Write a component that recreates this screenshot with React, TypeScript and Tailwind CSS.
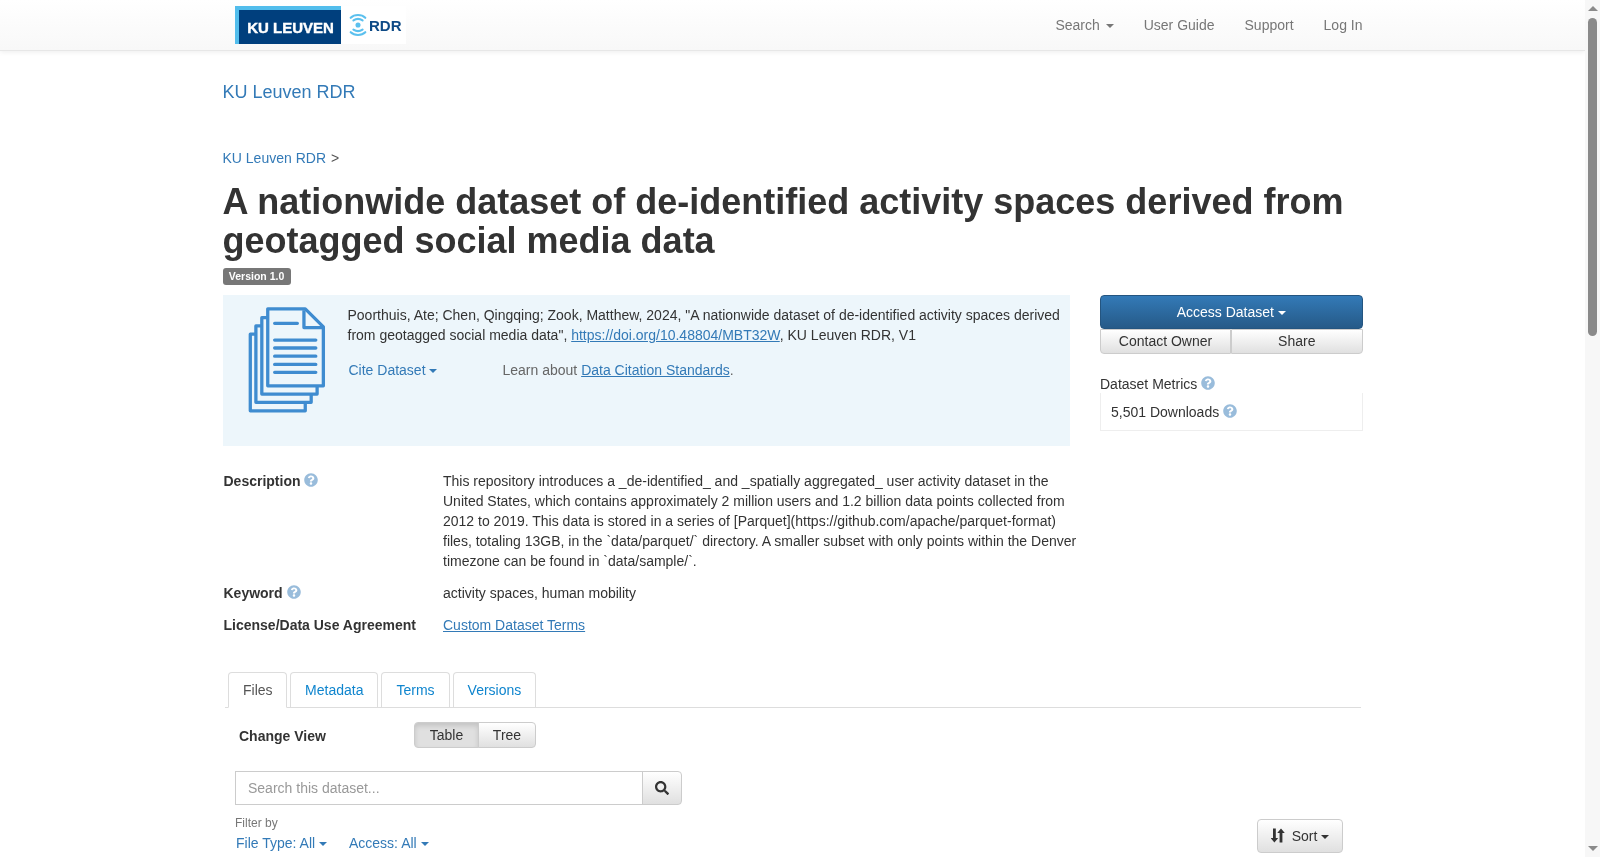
import React from 'react';
import { FaQuestionCircle, FaSearch } from 'react-icons/fa';

const Caret = ({ tight = false }: { tight?: boolean }) => (
  <span className={`inline-block w-0 h-0 align-middle border-x-4 border-t-4 border-x-transparent border-t-current ${tight ? 'ml-0' : 'ml-[2px]'}`} />
);

const Help = () => (
  <FaQuestionCircle className="inline-block align-[-1px] text-[#99bcdb]" size={14} />
);

const Logo = () => (
  <div className="flex h-[38px] w-[171px] bg-white mt-[6px]">
    <div className="w-[106px] h-[38px] bg-[#003f7d] border-l-4 border-t-4 border-[#52bdec] flex items-center justify-center">
      <span className="text-white font-bold text-[15px] leading-none pl-[1px] [-webkit-text-stroke:0.4px_white]">KU LEUVEN</span>
    </div>
    <div className="flex items-center pl-[7px]">
      <svg width="20" height="26" viewBox="0 0 22 26" fill="none" stroke="#5bc0ee" strokeWidth="2.4" strokeLinecap="round">
        <path d="M3 5 C7 1 15 1 19 5" />
        <path d="M6 8 C9 6 13 6 16 8" />
        <circle cx="11" cy="13" r="2.8" fill="#5bc0ee" stroke="none" />
        <path d="M6 18 C9 20 13 20 16 18" />
        <path d="M3 21 C7 25 15 25 19 21" />
      </svg>
      <span className="ml-[1px] text-[#0e4a86] font-bold text-[15px] leading-none">RDR</span>
    </div>
  </div>
);

const DocsIcon = () => (
  <svg width="79" height="109" viewBox="110 60 240 330" fill="none" stroke="#3f8cd0" strokeWidth="10" strokeLinejoin="round" className="shrink-0">
    <path d="M137 145 H120 V378 H287 V352" />
    <path d="M155 120 H137 V352 H305 V327" />
    <path d="M173 95 H155 V327 H323 V302" />
    <path d="M173 68 H287 L342 123 V302 H173 Z" />
    <path d="M283 72 V125 H340" />
    <path d="M194 112 H263 M194 163 H319 M194 187 H319 M194 212 H319 M194 237 H319 M194 261 H319" strokeLinecap="round" />
  </svg>
);

const Scrollbar = () => (
  <aside className="w-[15px] shrink-0 h-full bg-[#f7f7f7] flex flex-col items-center pt-[6px] pb-[6px]">
    <span className="w-0 h-0 border-x-[5px] border-b-[5px] border-x-transparent border-b-[#8a8a8a]" />
    <span className="mt-[7px] w-[9px] h-[318px] rounded-full bg-[#8a8a8a]" />
    <span className="mt-auto w-0 h-0 border-x-[5px] border-t-[5px] border-x-transparent border-t-[#8a8a8a]" />
  </aside>
);

const navItems = ['User Guide', 'Support', 'Log In'];
const tabs = ['Metadata', 'Terms', 'Versions'];

export default function App() {
  return (
    <div className="flex h-screen overflow-hidden [font-family:'Liberation_Sans',Arial,sans-serif] text-[14px] leading-[20px] text-[#333] bg-white">
      <main className="flex-1 min-w-0 overflow-hidden [will-change:transform]">
        <nav className="h-[51px] bg-gradient-to-b from-white to-[#f8f8f8] border-b border-[#e7e7e7] shadow-[0_1px_5px_rgba(0,0,0,0.075)]">
          <div className="w-[1170px] mx-auto pl-[27.5px] pr-[15px] flex justify-between">
            <Logo />
            <ul className="flex text-[#777]">
              <li className="px-[15px] py-[15px]">Search <Caret /></li>
              {navItems.map((item) => (
                <li key={item} className="px-[15px] py-[15px] last:pr-0">{item}</li>
              ))}
            </ul>
          </div>
        </nav>

        <div className="w-[1170px] mx-auto px-[15px]">
          <div className="pt-[31px] text-[18px] text-[#337ab7]">KU Leuven RDR</div>
          <div className="mt-[46px]">
            <span className="text-[#337ab7]">KU Leuven RDR</span>
            <span className="ml-[5px] text-[#555]">&gt;</span>
          </div>
          <h1 className="mt-[14px] text-[36px] leading-[39px] font-bold">
            A nationwide dataset of de-identified activity spaces derived from geotagged social media data
          </h1>
          <div className="mt-[8px] h-[17px]">
            <span className="block w-fit bg-[#777] text-white font-bold text-[10.5px] leading-[11px] rounded-[3px] px-[6.3px] pt-[3px] pb-[3px]">
              Version 1.0
            </span>
          </div>

          <div className="flex mt-[10px]">
            <div className="w-[847.5px] shrink-0">
              <div className="h-[151px] bg-[#edf6fb] flex pl-[24px] pt-[11px]">
                <DocsIcon />
                <div className="ml-[22px] -mt-[1px] w-[720px]">
                  <p>
                    Poorthuis, Ate; Chen, Qingqing; Zook, Matthew, 2024, "A nationwide dataset of de-identified activity spaces derived from geotagged social media data",{' '}
                    <span className="text-[#337ab7] underline">https://doi.org/10.48804/MBT32W</span>, KU Leuven RDR, V1
                  </p>
                  <div className="flex mt-[15px]">
                    <span className="w-[155px] pl-[1px] text-[#337ab7]">Cite Dataset <Caret tight /></span>
                    <span className="text-[#666]">
                      Learn about <span className="text-[#337ab7] underline">Data Citation Standards</span>.
                    </span>
                  </div>
                </div>
              </div>

              <div className="mt-[25px] flex">
                <div className="w-[220.5px] pl-[1px] font-bold shrink-0">Description <Help /></div>
                <p className="w-[640px] shrink-0">
                  This repository introduces a _de-identified_ and _spatially aggregated_ user activity dataset in the United States, which contains approximately 2 million users and 1.2 billion data points collected from 2012 to 2019. This data is stored in a series of [Parquet](https://github.com/apache/parquet-format) files, totaling 13GB, in the `data/parquet/` directory. A smaller subset with only points within the Denver timezone can be found in `data/sample/`.
                </p>
              </div>
              <div className="mt-[12px] flex">
                <div className="w-[220.5px] pl-[1px] font-bold shrink-0">Keyword <Help /></div>
                <div>activity spaces, human mobility</div>
              </div>
              <div className="mt-[12px] flex">
                <div className="w-[220.5px] pl-[1px] font-bold shrink-0">License/Data Use Agreement</div>
                <div className="text-[#337ab7] underline">Custom Dataset Terms</div>
              </div>
            </div>

            <div className="ml-[30px] w-[262.5px] shrink-0">
              <button className="block w-full h-[34px] rounded-[4px] border border-[#245580] bg-gradient-to-b from-[#337ab7] to-[#265a88] text-white">
                Access Dataset <Caret tight />
              </button>
              <div className="flex h-[25px]">
                <button className="w-[131px] pb-[2px] border border-[#ccc] rounded-bl-[4px] bg-gradient-to-b from-white to-[#e0e0e0] text-[#333]">Contact Owner</button>
                <button className="flex-1 pb-[2px] border border-[#ccc] rounded-br-[4px] bg-gradient-to-b from-white to-[#e0e0e0] text-[#333]">Share</button>
              </div>
              <div className="mt-[20px]">Dataset Metrics <Help /></div>
              <div className="h-[38px] -mt-[1px] border-x border-b border-[#eee] pl-[10px] pt-[9px]">5,501 Downloads <Help /></div>
            </div>
          </div>

          <ul className="mt-[37px] ml-[2.5px] mr-[2px] h-[36px] flex gap-[3px] pl-[3px] border-b border-[#ddd]">
            <li className="h-[36px] pl-[14px] pr-[13.5px] pt-[7px] border border-[#ddd] border-b-white rounded-t-[4px] bg-white text-[#555]">Files</li>
            {tabs.map((tab) => (
              <li key={tab} className="h-[35px] px-[14px] pt-[7px] border border-b-0 border-[#ddd] rounded-t-[4px] text-[#0f85ce]">{tab}</li>
            ))}
          </ul>

          <div className="mt-[14px] flex items-center h-[26px] pl-[16.5px]">
            <span className="w-[175px] font-bold pt-[1px]">Change View</span>
            <div className="flex h-[26px] text-[14px]">
              <button className="w-[65px] rounded-l-[4px] border border-[#ccc] bg-[#e0e0e0] shadow-[inset_0_3px_5px_rgba(0,0,0,0.125)] text-[#333]">Table</button>
              <button className="w-[58px] -ml-[1px] rounded-r-[4px] border border-[#ccc] bg-gradient-to-b from-white to-[#e0e0e0] text-[#333]">Tree</button>
            </div>
          </div>

          <div className="mt-[23px] ml-[12.5px] w-[447px] h-[34px] flex">
            <input
              placeholder="Search this dataset..."
              readOnly
              className="flex-1 min-w-0 border border-[#ccc] px-[12px] placeholder:text-[#999] outline-none"
            />
            <button className="w-[40px] -ml-[1px] flex items-center justify-center border border-[#ccc] rounded-r-[4px] bg-gradient-to-b from-white to-[#e0e0e0] text-[#333]">
              <FaSearch size={14} />
            </button>
          </div>

          <div className="mt-[10px] ml-[12.5px] flex justify-between">
            <div>
              <div className="text-[12px] leading-[17px] text-[#777]">Filter by</div>
              <div className="mt-[1px] ml-[1px] flex text-[#337ab7]">
                <span className="w-[113px]">File Type: All <Caret tight /></span>
                <span>Access: All <Caret tight /></span>
              </div>
            </div>
            <button className="mt-[4px] w-[86px] h-[34px] border border-[#ccc] rounded-[4px] bg-gradient-to-b from-white to-[#e0e0e0] flex items-center justify-center gap-[7px] text-[#333] mr-[19.5px]">
              <svg width="14" height="15" viewBox="0 0 14 15" fill="currentColor" className="-mt-[2px]">
                <path d="M2 0.5h2.8v9.5h2.4L3.4 14.5-.4 10H2z" />
                <path d="M11.4 14.5H8.6V5H6.2L10 .5 13.8 5h-2.4z" />
              </svg>
              <span>Sort <Caret tight /></span>
            </button>
          </div>
        </div>
      </main>
      <Scrollbar />
    </div>
  );
}
